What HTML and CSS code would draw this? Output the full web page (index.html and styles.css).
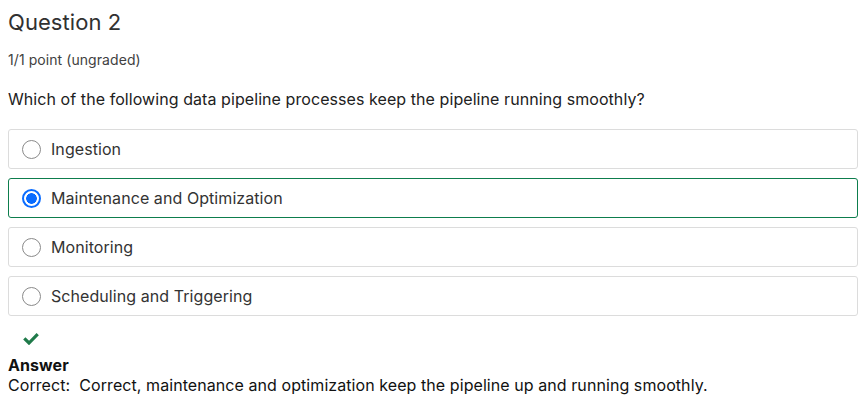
FILE: index.html
```html
<!DOCTYPE html>
<html>
<head>
<meta charset="utf-8">
<link rel="stylesheet" href="styles.css">
</head>
<body>
<div class="problem">
  <h2 class="title">Question 2</h2>
  <div class="points">1/1 point (ungraded)</div>
  <p class="prompt">Which of the following data pipeline processes keep the pipeline running smoothly?</p>
  <div class="choices">
    <label class="choice"><span class="radio"></span><span>Ingestion</span></label>
    <label class="choice selected"><span class="radio on"></span><span>Maintenance and Optimization</span></label>
    <label class="choice"><span class="radio"></span><span>Monitoring</span></label>
    <label class="choice"><span class="radio"></span><span>Scheduling and Triggering</span></label>
  </div>
  <div class="status">
    <svg class="check" width="16" height="13" viewBox="0 0 16 13"><path d="M1.3 6.3 L6 11 L14.7 2.2" fill="none" stroke="#1f7a4a" stroke-width="3.2"/></svg>
  </div>
  <div class="answer">
    <div class="answer-label">Answer</div>
    <div class="answer-text">Correct:&nbsp; Correct, maintenance and optimization keep the pipeline up and running smoothly.</div>
  </div>
</div>
</body>
</html>
```
FILE: styles.css
```css
body {
  margin: 8px;
  font-family: Inter, "Open Sans", sans-serif;
  color: #333;
  background: #fff;
  letter-spacing: 0.07px;
}
.title {
  margin: 1px 0 0;
  font-size: 22px;
  font-weight: 400;
  line-height: 26px;
  color: #313131;
}
.points {
  margin-top: 15px;
  font-size: 14px;
  line-height: 20px;
  color: #414141;
}
.prompt {
  margin: 18px 0 0;
  font-size: 16px;
  line-height: 22px;
  color: #212121;
}
.choices {
  margin-top: 19px;
  display: flex;
  flex-direction: column;
  gap: 9px;
}
.choice {
  display: flex;
  align-items: center;
  gap: 10px;
  height: 40px;
  box-sizing: border-box;
  padding-left: 13px;
  border: 1px solid #dcdcdc;
  border-radius: 3px;
  font-size: 16px;
  color: #333;
}
.choice.selected {
  border-color: #0d7d4d;
}
.radio {
  width: 17px;
  height: 17px;
  border: 1px solid #8a8a8a;
  border-radius: 50%;
  box-sizing: content-box;
  flex: none;
}
.radio.on {
  border: 2px solid #0a6cff;
  width: 15px;
  height: 15px;
  background: radial-gradient(circle, #0a6cff 0 5px, #fff 5.6px);
}
.status {
  margin-top: 16px;
  padding-left: 15px;
  height: 13px;
}
.check {
  display: block;
}
.answer {
  margin-top: 11px;
  font-size: 16px;
  color: #111;
}
.answer-label {
  font-weight: 700;
  line-height: 19px;
}
.answer-text {
  line-height: 20px;
}
```
